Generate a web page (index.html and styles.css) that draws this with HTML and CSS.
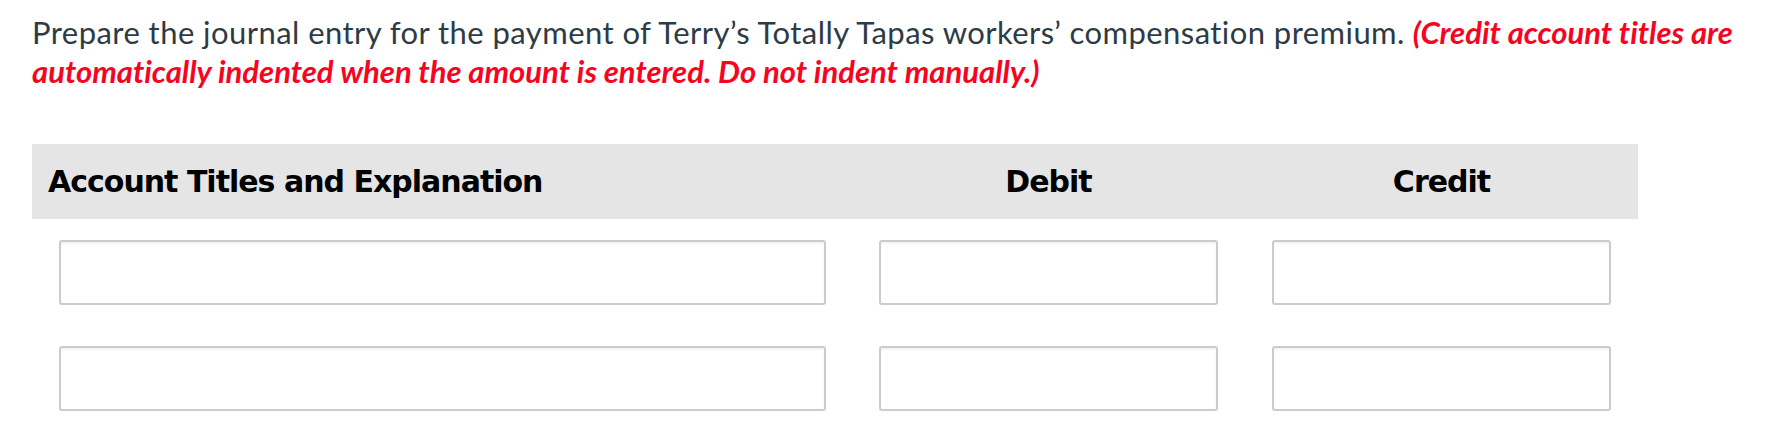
FILE: index.html
```html
<!DOCTYPE html>
<html lang="en">
<head>
<meta charset="utf-8">
<title>Journal entry</title>
<link rel="stylesheet" href="styles.css">
</head>
<body>
<p class="prompt"><span class="lead">Prepare the journal entry for the payment of Terry’s Totally Tapas workers’ compensation premium.</span> <em class="note">(Credit account titles are automatically indented when the amount is entered. Do not indent manually.)</em></p>

<div class="journal">
  <div class="jhead">
    <div class="hcell hcell-account">Account Titles and Explanation</div>
    <div class="hcell hcell-amount">Debit</div>
    <div class="hcell hcell-amount">Credit</div>
  </div>
  <div class="jrow">
    <input class="field field-account" type="text" aria-label="Account title row 1">
    <input class="field field-amount" type="text" aria-label="Debit row 1">
    <input class="field field-amount" type="text" aria-label="Credit row 1">
  </div>
  <div class="jrow">
    <input class="field field-account" type="text" aria-label="Account title row 2">
    <input class="field field-amount" type="text" aria-label="Debit row 2">
    <input class="field field-amount" type="text" aria-label="Credit row 2">
  </div>
</div>
</body>
</html>
```
FILE: styles.css
```css
html, body {
  margin: 0;
  padding: 0;
  background: #ffffff;
}

body {
  font-family: "Lato", "Liberation Sans", sans-serif;
}

.prompt {
  margin: 13px 32px 0 32px;
  font-size: 31px;
  line-height: 39px;
  color: #2d3b45;
  font-variant-ligatures: no-common-ligatures;
}

.lead {
  letter-spacing: 0.44px;
}

.note {
  font-style: italic;
  font-weight: 700;
  color: #f5051f;
}

.journal {
  width: 1606px;
  margin: 53px 0 0 32px;
}

.jhead {
  display: grid;
  grid-template-columns: 820px 393px 393px;
  height: 75px;
  background: #e5e5e5;
}

.hcell {
  display: flex;
  align-items: center;
  font-family: "DejaVu Sans", "Liberation Sans", sans-serif;
  font-weight: 700;
  font-size: 30px;
  letter-spacing: -1px;
  color: #000000;
}

.hcell-account {
  padding-left: 16px;
}

.hcell-amount {
  justify-content: center;
}

.jrow {
  display: grid;
  grid-template-columns: 820px 393px 393px;
  align-items: center;
  margin-top: 21px;
}

.jrow + .jrow {
  margin-top: 41px;
}

.field {
  box-sizing: border-box;
  height: 65px;
  margin: 0;
  padding: 0 10px;
  border: 2px solid #cbcbcb;
  border-radius: 3px;
  background: #ffffff;
  box-shadow: inset 0 2px 2px rgba(0, 0, 0, 0.05);
  font-family: "Lato", sans-serif;
  font-size: 24px;
  outline: none;
}

.field-account {
  width: 767px;
  margin-left: 27px;
}

.field-amount {
  width: 339px;
  justify-self: center;
}
```
